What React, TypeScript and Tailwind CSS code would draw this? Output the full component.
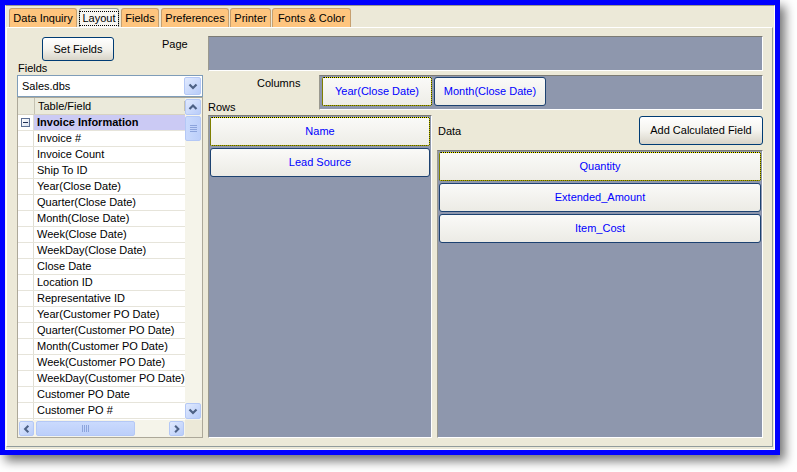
import React from "react";

const FIELDS = [
  "Invoice #",
  "Invoice Count",
  "Ship To ID",
  "Year(Close Date)",
  "Quarter(Close Date)",
  "Month(Close Date)",
  "Week(Close Date)",
  "WeekDay(Close Date)",
  "Close Date",
  "Location ID",
  "Representative ID",
  "Year(Customer PO Date)",
  "Quarter(Customer PO Date)",
  "Month(Customer PO Date)",
  "Week(Customer PO Date)",
  "WeekDay(Customer PO Date)",
  "Customer PO Date",
  "Customer PO #",
];

const TABS = [
  { label: "Data Inquiry", cls: "w-[68px]" },
  { label: "Layout", cls: "w-[40px] ml-[2px]", active: true },
  { label: "Fields", cls: "w-[38px] ml-[2px]" },
  { label: "Preferences", cls: "w-[68px] ml-[2px]" },
  { label: "Printer", cls: "w-[41px] ml-[1px]" },
  { label: "Fonts & Color", cls: "w-[79px] ml-[1px]" },
];

const ARROWS = {
  up: "M3.5 9 L7 5.5 L10.5 9",
  down: "M3.5 5.5 L7 9 L10.5 5.5",
  left: "M9 3.5 L5.5 7 L9 10.5",
  right: "M5.5 3.5 L9 7 L5.5 10.5",
};

function Arrow({ dir }: { dir: keyof typeof ARROWS }) {
  return (
    <svg width="14" height="14" viewBox="0 0 14 14">
      <path d={ARROWS[dir]} fill="none" stroke="#4D6185" strokeWidth="2.2" />
    </svg>
  );
}

function ScrollBtn({ dir, className = "" }: { dir: keyof typeof ARROWS; className?: string }) {
  return (
    <div
      className={`flex flex-none items-center justify-center rounded-[2px] border border-[#B4C8F6] bg-gradient-to-br from-[#E1EAFE] to-[#B8CCF9] ${className}`}
    >
      <Arrow dir={dir} />
    </div>
  );
}

function FieldBtn({ label, focus = false }: { label: string; focus?: boolean }) {
  if (focus) {
    return (
      <div className="h-[29px] flex-none rounded-[2px] border border-dotted border-black bg-[#FFFF00]">
        <div className="flex h-full items-center justify-center bg-gradient-to-b from-[#FAFAF8] to-[#EEEDE7] text-[#0000FF]">
          {label}
        </div>
      </div>
    );
  }
  return (
    <div className="flex h-[29px] flex-none items-center justify-center rounded-[3px] border border-[#1D4271] bg-gradient-to-b from-[#FAFAF8] to-[#ECEBE5] text-[#0000FF]">
      {label}
    </div>
  );
}

function XpButton({ label, className = "" }: { label: string; className?: string }) {
  return (
    <div
      className={`flex flex-none items-center justify-center rounded-[3px] border border-[#003C74] bg-gradient-to-b from-[#FFFFFF] via-[#F4F3EE] to-[#D8D4C8] text-black ${className}`}
    >
      {label}
    </div>
  );
}

const sunken = "border border-t-[#7C7B74] border-l-[#9A998F] border-r-white border-b-white bg-[#8E97AD]";

export default function App() {
  return (
    <div className="h-[472px] w-[797px] bg-white font-['Liberation_Sans',Arial,sans-serif] text-[11px] leading-[13px] text-black">
      <div className="flex h-[455px] w-[780px] border-[5px] border-[#0000FF] shadow-[5px_6px_10px_rgba(0,0,0,0.55)]">
        <div className="flex flex-1 flex-col border border-t-[#9B9A92] border-l-[#F4F3EE] border-r-white border-b-white bg-[#ECE9D8] pt-[2px] pb-[2px] pr-px">
          {/* tabs */}
          <div className="flex h-[19px] flex-none pl-[3px]">
            {TABS.map((t) =>
              t.active ? (
                <div
                  key={t.label}
                  className={`flex flex-none items-center justify-center rounded-t-[3px] border border-b-0 border-[#919B9C] bg-[#F7F6F1] ${t.cls}`}
                >
                  <span className="border border-dotted border-black px-[2px] leading-[13px]">{t.label}</span>
                </div>
              ) : (
                <div
                  key={t.label}
                  className={`flex flex-none items-center justify-center rounded-t-[3px] border border-b-0 border-[#C6A070] bg-[#FEC57E] ${t.cls}`}
                >
                  {t.label}
                </div>
              )
            )}
          </div>

          {/* tab panel */}
          <div className="flex flex-1 border border-t-white border-l-white border-r-[#919B9C] border-b-[#919B9C] pl-[10px] pt-[8px]">
            {/* left column */}
            <div className="flex w-[186px] flex-none flex-col">
              <div className="flex h-[24px] flex-none">
                <XpButton label="Set Fields" className="ml-[25px] mt-px h-[24px] w-[72px]" />
                <div className="ml-[48px] mt-[2px]">Page</div>
              </div>
              <div className="flex h-[15px] flex-none items-end pl-px">Fields</div>
              <div className="flex h-[22px] flex-none items-center border border-[#7F9DB9] bg-white">
                <span className="flex-1 pl-[4px]">Sales.dbs</span>
                <ScrollBtn dir="down" className="mr-px h-[18px] w-[17px]" />
              </div>
              {/* grid */}
              <div className="flex h-[341px] flex-none flex-col border border-[#ACA899] bg-white">
                <div className="flex min-h-0 flex-1">
                  <div className="flex min-w-0 flex-1 flex-col overflow-hidden">
                    <div className="flex h-[17px] flex-none border-b border-[#D6D2C2] bg-[#EBEADB]">
                      <div className="w-[16px] flex-none" />
                      <div className="flex flex-1 items-center border-l border-[#C5C2B2] pl-[3px]">Table/Field</div>
                      <div className="mt-[3px] h-[10px] w-px bg-[#C5C2B2]" />
                    </div>
                    <div className="flex h-[16px] flex-none border-b border-[#E6E4DA]">
                      <div className="flex w-[16px] flex-none items-center justify-center border-r border-[#E0DED4]">
                        <div className="flex h-[9px] w-[9px] items-center justify-center border border-[#5C6F93] bg-gradient-to-br from-white to-[#D8E0EE]">
                          <div className="h-px w-[5px] bg-[#1F2F55]" />
                        </div>
                      </div>
                      <div className="flex flex-1 items-center bg-[#CBCAF4] pl-[3px] font-bold">Invoice Information</div>
                    </div>
                    {FIELDS.map((f) => (
                      <div key={f} className="flex h-[16px] flex-none border-b border-[#E6E4DA]">
                        <div className="w-[16px] flex-none border-r border-[#E0DED4]" />
                        <div className="flex flex-1 items-center whitespace-nowrap pl-[3px]">{f}</div>
                      </div>
                    ))}
                    <div className="flex flex-1">
                      <div className="w-[16px] flex-none border-r border-[#E0DED4]" />
                    </div>
                  </div>
                  {/* vertical scrollbar */}
                  <div className="flex w-[17px] flex-none flex-col bg-[#F5F4EA] py-px">
                    <ScrollBtn dir="up" className="h-[16px] w-[16px]" />
                    <div className="mt-px flex h-[25px] w-[16px] flex-col items-center justify-center gap-px rounded-[2px] border border-[#B4C8F6] bg-gradient-to-r from-[#CADAFD] to-[#BCCFFA]">
                      <div className="h-px w-[7px] bg-[#8CA4DC]" />
                      <div className="h-px w-[7px] bg-[#8CA4DC]" />
                      <div className="h-px w-[7px] bg-[#8CA4DC]" />
                      <div className="h-px w-[7px] bg-[#8CA4DC]" />
                    </div>
                    <div className="flex-1" />
                    <ScrollBtn dir="down" className="h-[16px] w-[16px]" />
                  </div>
                </div>
                {/* horizontal scrollbar */}
                <div className="flex h-[17px] flex-none">
                  <div className="flex flex-1 items-center bg-[#F5F4EA] px-px">
                    <ScrollBtn dir="left" className="h-[15px] w-[15px]" />
                    <div className="ml-[2px] flex h-[15px] w-[99px] flex-none items-center justify-center gap-px rounded-[2px] border border-[#B4C8F6] bg-gradient-to-b from-[#CADAFD] to-[#BCCFFA]">
                      <div className="h-[7px] w-px bg-[#8CA4DC]" />
                      <div className="h-[7px] w-px bg-[#8CA4DC]" />
                      <div className="h-[7px] w-px bg-[#8CA4DC]" />
                      <div className="h-[7px] w-px bg-[#8CA4DC]" />
                    </div>
                    <div className="flex-1" />
                    <ScrollBtn dir="right" className="h-[15px] w-[15px]" />
                  </div>
                  <div className="w-[17px] flex-none bg-[#ECE9D8]" />
                </div>
              </div>
            </div>

            {/* right column */}
            <div className="ml-[5px] flex w-[555px] flex-none flex-col">
              <div className={`h-[35px] flex-none ${sunken}`} />
              <div className="mt-[4px] flex h-[35px] flex-none">
                <div className="flex w-[111px] flex-none flex-col">
                  <div className="pl-[49px] pt-[2px]">Columns</div>
                  <div className="mt-[11px]">Rows</div>
                </div>
                <div className={`flex flex-1 gap-[2px] pl-[2px] pt-px ${sunken}`}>
                  <div className="w-[110px] flex-none">
                    <FieldBtn label="Year(Close Date)" focus />
                  </div>
                  <div className="w-[112px] flex-none">
                    <FieldBtn label="Month(Close Date)" />
                  </div>
                </div>
              </div>
              <div className="mt-[5px] flex h-[323px] flex-none">
                <div className={`flex w-[224px] flex-none flex-col gap-[2px] px-px pt-px ${sunken}`}>
                  <FieldBtn label="Name" focus />
                  <FieldBtn label="Lead Source" />
                </div>
                <div className="ml-[5px] flex flex-1 flex-col">
                  <div className="flex h-[35px] flex-none items-start">
                    <div className="mt-[10px] pl-px">Data</div>
                    <div className="flex-1" />
                    <XpButton label="Add Calculated Field" className="mt-px h-[29px] w-[124px]" />
                  </div>
                  <div className={`flex flex-1 flex-col gap-[2px] px-px pt-px ${sunken}`}>
                    <FieldBtn label="Quantity" focus />
                    <FieldBtn label="Extended_Amount" />
                    <FieldBtn label="Item_Cost" />
                  </div>
                </div>
              </div>
            </div>
          </div>
        </div>
      </div>
    </div>
  );
}
